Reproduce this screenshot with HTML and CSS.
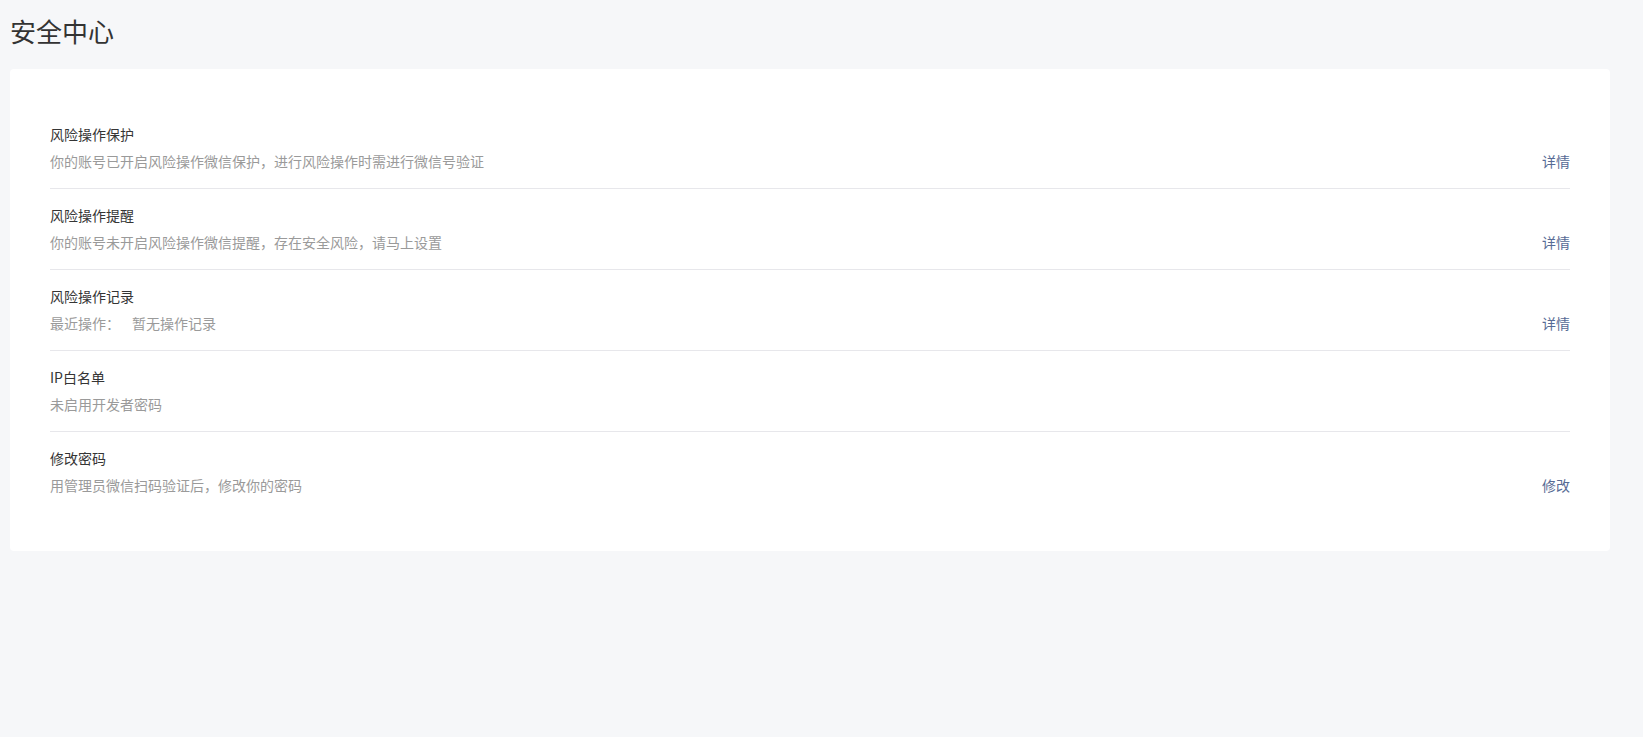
FILE: index.html
```html
<!DOCTYPE html>
<html lang="zh-CN">
<head>
<meta charset="utf-8">
<title>安全中心</title>
<link rel="stylesheet" href="styles.css">
</head>
<body>
<div class="page">
  <h1 class="page-title">安全中心</h1>
  <div class="card">
    <div class="item">
      <div class="item-main">
        <div class="item-title">风险操作保护</div>
        <div class="item-desc">你的账号已开启风险操作微信保护，进行风险操作时需进行微信号验证</div>
      </div>
      <a class="item-link" href="#">详情</a>
    </div>
    <div class="item">
      <div class="item-main">
        <div class="item-title">风险操作提醒</div>
        <div class="item-desc">你的账号未开启风险操作微信提醒，存在安全风险，请马上设置</div>
      </div>
      <a class="item-link" href="#">详情</a>
    </div>
    <div class="item">
      <div class="item-main">
        <div class="item-title">风险操作记录</div>
        <div class="item-desc">最近操作：<span class="record">暂无操作记录</span></div>
      </div>
      <a class="item-link" href="#">详情</a>
    </div>
    <div class="item">
      <div class="item-main">
        <div class="item-title">IP白名单</div>
        <div class="item-desc">未启用开发者密码</div>
      </div>
    </div>
    <div class="item">
      <div class="item-main">
        <div class="item-title">修改密码</div>
        <div class="item-desc">用管理员微信扫码验证后，修改你的密码</div>
      </div>
      <a class="item-link" href="#">修改</a>
    </div>
  </div>
</div>
</body>
</html>
```
FILE: styles.css
```css
html, body {
  margin: 0;
  padding: 0;
  background: #f6f7f9;
}
body {
  font-family: "Noto Sans CJK SC", "Noto Sans", sans-serif;
  color: #353535;
}
.page {
  padding: 0 10px;
}
.page-title {
  margin: 0;
  padding: 13px 0 20px;
  font-size: 26px;
  line-height: 36px;
  font-weight: 400;
  color: #333;
}
.card {
  width: 1520px;
  background: #fff;
  border-radius: 4px;
  padding: 39px 40px;
}
.item {
  display: flex;
  align-items: flex-end;
  justify-content: space-between;
  padding: 15px 0 16px;
  border-bottom: 1px solid #e7e7eb;
}
.item:last-child {
  border-bottom: none;
}
.item-title {
  font-size: 14px;
  line-height: 22px;
  color: #353535;
}
.item-desc {
  margin-top: 5px;
  font-size: 14px;
  line-height: 22px;
  color: #9a9a9a;
}
.record {
  margin-left: 12px;
}
.item-link {
  font-size: 14px;
  line-height: 22px;
  color: #576b95;
  text-decoration: none;
}
```
